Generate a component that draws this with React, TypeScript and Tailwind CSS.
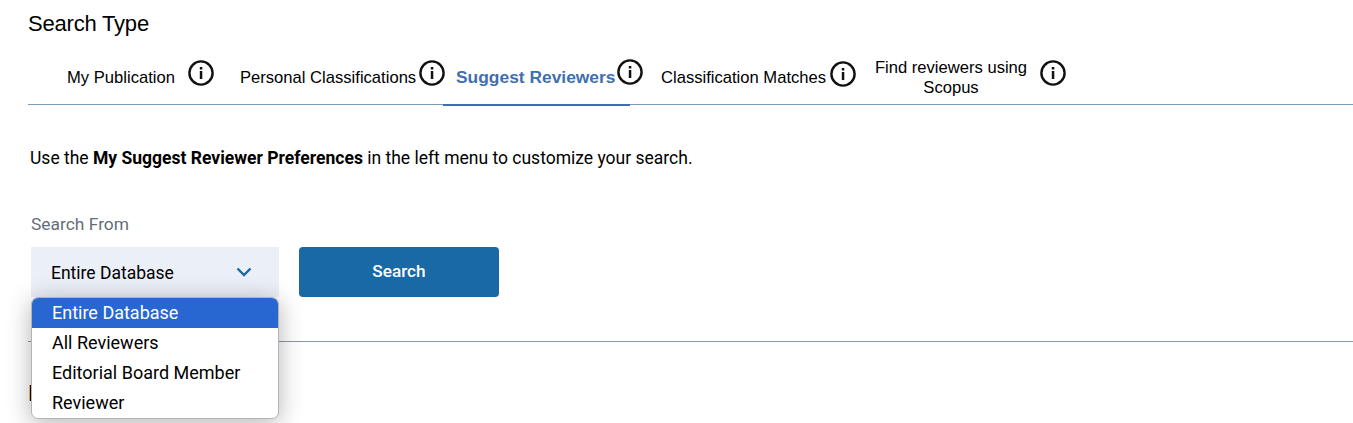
function Info() {
  return (
    <svg width="28" height="28" viewBox="0 0 28 28" className="shrink-0 block" fill="none">
      <circle cx="14" cy="14" r="11.6" stroke="#111" strokeWidth="2.4" />
      <rect x="12.8" y="12" width="2.5" height="8" fill="#111" />
      <rect x="12.8" y="8" width="2.5" height="2.5" fill="#111" />
    </svg>
  );
}

export default function App() {
  return (
    <div className="relative h-[423px] w-[1353px] overflow-hidden bg-white font-['Roboto',sans-serif] text-black">
      <div className="pl-[28px]">
        <h2 className="pt-[11px] text-[22px] leading-[26px] font-normal font-['Liberation_Sans',sans-serif] tracking-[-0.2px]">Search Type</h2>
        <div className="mt-[12px] flex h-[56px] items-start border-b border-[#7f97b0] font-['Liberation_Sans',sans-serif] text-[16.6px]">
          <div className="flex w-[212px] pl-[39px] pt-[10px]">
            <span className="mt-[9px] leading-[19px] whitespace-nowrap">My Publication</span>
            <span className="ml-[12px]"><Info /></span>
          </div>
          <div className="flex w-[203px] pt-[10px]">
            <span className="mt-[9px] leading-[19px] whitespace-nowrap">Personal Classifications</span>
            <span className="ml-[2px]"><Info /></span>
          </div>
          <div className="relative flex h-[57px] w-[187px] pl-[13px] pt-[9px]">
            <span className="mt-[10px] leading-[19px] font-bold text-[17.4px] whitespace-nowrap text-[#3f6fb0]">Suggest Reviewers</span>
            <span className="ml-[1px]"><Info /></span>
            <div className="absolute bottom-0 left-0 h-[2px] w-full bg-[#3f6fb0]" />
          </div>
          <div className="flex w-[214px] pl-[31px] pt-[11px]">
            <span className="mt-[8px] leading-[19px] whitespace-nowrap">Classification Matches</span>
            <span className="ml-[3px]"><Info /></span>
          </div>
          <div className="flex pt-[9px]">
            <span className="w-[184px] pl-[30px] text-center leading-[20px]">Find reviewers using<br />Scopus</span>
            <span className="mt-[1px] ml-[11px]"><Info /></span>
          </div>
        </div>
        <p className="mt-[43px] ml-[2px] text-[17.5px] leading-[20px]">
          Use the <strong className="font-bold">My Suggest Reviewer Preferences</strong> in the left menu to customize your search.
        </p>
        <div className="mt-[46px] ml-[3px] text-[17.4px] leading-[20px] text-[#646e78]">Search From</div>
        <div className="mt-[13px] ml-[3px] flex gap-[20px]">
          <div className="flex h-[50px] w-[248px] items-center justify-between bg-[#ebeff7] pl-[20px] pr-[27px] text-[17.5px]">
            <span className="mt-[2px]">Entire Database</span>
            <svg width="16" height="10" viewBox="0 0 16 10" fill="none" className="-mt-[1px]">
              <path d="M1.5 1.5 L8 8 L14.5 1.5" stroke="#1a69a7" strokeWidth="2.4" />
            </svg>
          </div>
          <button className="h-[50px] w-[200px] rounded-[4px] bg-[#1a69a7] text-center text-[17.2px] font-medium text-white">Search</button>
        </div>
        <div className="mt-[44px] h-px bg-[#8b9aa8]" />
        <div className="mt-[39px] text-[22px] leading-[26px]">Results</div>
      </div>
      <ul className="absolute left-[31px] top-[297px] w-[248px] overflow-hidden rounded-[7px] border border-[#b4b4b4] bg-white text-[18px] leading-[30px] shadow-[0_4px_24px_rgba(0,0,0,0.3)]">
        <li className="bg-[#2866d2] pl-[20px] text-white">Entire Database</li>
        <li className="pl-[20px]">All Reviewers</li>
        <li className="pl-[20px]">Editorial Board Member</li>
        <li className="pl-[20px]">Reviewer</li>
      </ul>
    </div>
  );
}
